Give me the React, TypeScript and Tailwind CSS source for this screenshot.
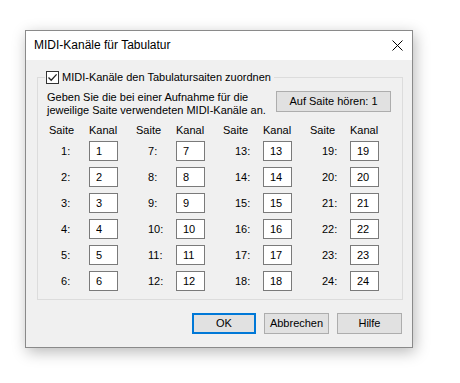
import { useState } from 'react'

const FONT = { fontFamily: '"Liberation Sans", Arial, sans-serif' }

const columns = [0, 1, 2, 3].map((c) => [1, 2, 3, 4, 5, 6].map((r) => c * 6 + r))

export default function App() {
  const [mapped, setMapped] = useState(true)
  const [channels, setChannels] = useState<string[]>(Array.from({ length: 24 }, (_, i) => String(i + 1)))

  return (
    <div className="min-h-screen bg-white text-black text-[11px] leading-[13px]" style={FONT}>
      <div className="pl-[25px] pt-[30px]">
        {/* DIALOG WINDOW */}
        <div className="w-[388px] h-[318px] border border-[#8a8a8a] bg-[#f0f0f0] flex flex-col shadow-[2px_4px_14px_rgba(0,0,0,0.28)]">
          {/* TITLE BAR */}
          <div className="h-[29px] bg-white flex items-center justify-between pl-[8px]">
            <span className="text-[12px]">MIDI-Kanäle für Tabulatur</span>
            <div className="w-[30px] h-[29px] flex items-center justify-center">
              <svg width="11" height="11" viewBox="0 0 11 11">
                <path d="M0.5 0.5 L10.5 10.5 M10.5 0.5 L0.5 10.5" stroke="#000" strokeWidth="1" />
              </svg>
            </div>
          </div>

          {/* CONTENT */}
          <div className="flex-1 pl-[11px] pr-[10px] pt-[11px]">
            <fieldset className="w-[366px] border border-[#dcdcdc] pl-[9px] pr-[11px] pb-[8px]">
              <legend className="ml-[-2px] pl-[1px] pr-[3px] flex items-center gap-[3px]">
                <button
                  onClick={() => setMapped(!mapped)}
                  className="w-[13px] h-[13px] border border-[#333] bg-white flex items-center justify-center"
                >
                  {mapped && (
                    <svg width="11" height="11" viewBox="0 0 11 11">
                      <path d="M1.5 5.5 L4.2 8.3 L9.6 2.4" fill="none" stroke="#222" strokeWidth="1.3" />
                    </svg>
                  )}
                </button>
                <span>MIDI-Kanäle den Tabulatursaiten zuordnen</span>
              </legend>

              <div className="flex justify-between items-start mt-[7px]">
                <p className="whitespace-nowrap">
                  Geben Sie die bei einer Aufnahme für die
                  <br />
                  jeweilige Saite verwendeten MIDI-Kanäle an.
                </p>
                <button className="w-[115px] h-[21px] bg-[#e1e1e1] border border-[#adadad]">
                  Auf Saite hören: 1
                </button>
              </div>

              {/* CHANNEL GRID */}
              <div className="grid grid-cols-[87px_87px_87px_69px] mt-[7px] ml-[2px]">
                {columns.map((col, ci) => (
                  <div key={ci} className="flex flex-col gap-[6px]">
                    <div className="flex mb-[-2px]">
                      <span className="w-[40px]">Saite</span>
                      <span>Kanal</span>
                    </div>
                    {col.map((n) => (
                      <div key={n} className="flex items-center h-[20px]">
                        <span className="w-[40px] pl-[12px]">{n}:</span>
                        <input
                          value={channels[n - 1]}
                          onChange={(e) => {
                            const next = [...channels]
                            next[n - 1] = e.target.value
                            setChannels(next)
                          }}
                          className="w-[29px] h-[20px] border border-[#7a7a7a] bg-white pl-[6px] outline-none"
                        />
                      </div>
                    ))}
                  </div>
                ))}
              </div>
            </fieldset>

            {/* BUTTONS */}
            <div className="flex justify-end gap-[8px] mt-[13px]">
              <button className="w-[64px] h-[21px] bg-[#e1e1e1] border-2 border-[#0078d7]">OK</button>
              <button className="w-[65px] h-[21px] bg-[#e1e1e1] border border-[#adadad]">Abbrechen</button>
              <button className="w-[65px] h-[21px] bg-[#e1e1e1] border border-[#adadad]">Hilfe</button>
            </div>
          </div>
        </div>
      </div>
    </div>
  )
}
